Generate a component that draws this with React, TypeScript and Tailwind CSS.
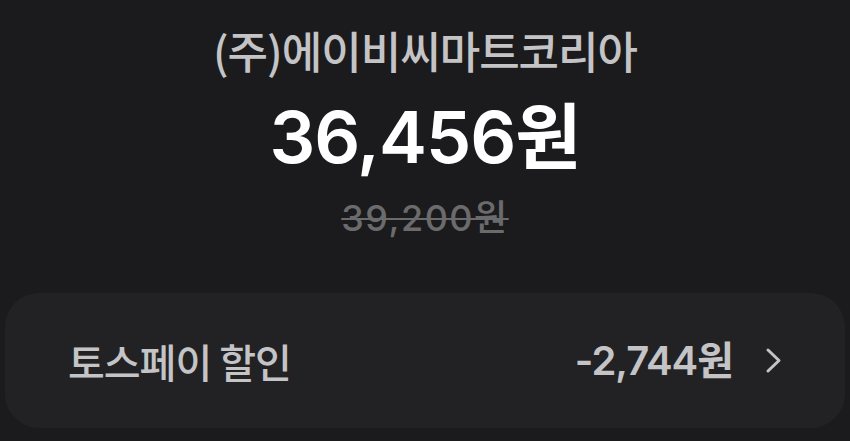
import React from "react";

export default function App() {
  return (
    <div className="w-[850px] h-[441px] bg-[#1b1b1d] flex flex-col items-center overflow-hidden">
      <div className="mt-[28px] h-[44px] flex items-center leading-none text-[44px] font-medium text-[#c4c4c6] tracking-[-1px] font-['Noto_Sans_CJK_KR','Noto_Sans',sans-serif]">
        (주)에이비씨마트코리아
      </div>
      <div className="mt-[28px] h-[74px] flex items-center leading-none text-[72px] font-semibold text-white tracking-[-1px] font-['Inter','Noto_Sans_CJK_KR',sans-serif]">
        36,456원
      </div>
      <div className="mt-[26px] h-[36px] flex items-center leading-none text-[36px] font-medium text-[#6b6b6e] tracking-[1.5px] line-through decoration-[2px] font-['Inter','Noto_Sans_CJK_KR',sans-serif]">
        39,200원
      </div>
      <div className="mt-[57px] w-[840px] h-[135px] rounded-[34px] bg-[#222225] flex items-center justify-between px-[63px]">
        <span className="leading-none text-[40px] font-medium text-[#c4c4c6] tracking-[-1px] font-['Noto_Sans_CJK_KR','Noto_Sans',sans-serif]">
          토스페이 할인
        </span>
        <div className="flex items-center gap-[32px]">
          <span className="leading-none text-[40px] font-semibold text-[#c4c4c6] tracking-[-1px] font-['Inter','Noto_Sans_CJK_KR',sans-serif]">
            -2,744원
          </span>
          <svg width="17" height="27" viewBox="0 0 17 27" fill="none">
            <path d="M3 3 L14 13.5 L3 24" stroke="#c4c4c6" strokeWidth="3" strokeLinecap="round" strokeLinejoin="round" />
          </svg>
        </div>
      </div>
    </div>
  );
}
